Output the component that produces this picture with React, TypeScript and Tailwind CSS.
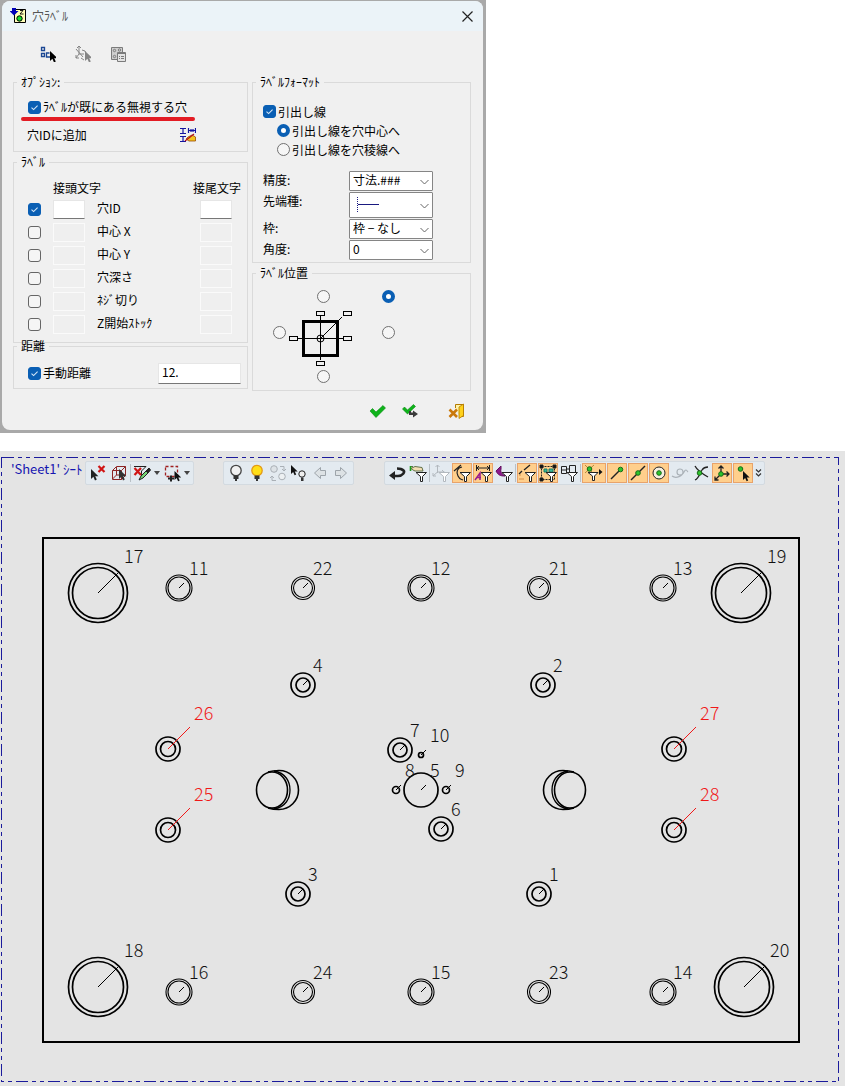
import { useId, type ReactNode } from "react";

/* ---------- form controls ---------- */

type CheckProps = { label?: string; ariaLabel?: string; checked?: boolean };

function Check({ label, ariaLabel, checked = false }: CheckProps) {
  const id = useId();
  return (
    <span className="flex items-center gap-0.5">
      <span className="grid shrink-0">
        <input
          id={id}
          type="checkbox"
          defaultChecked={checked}
          aria-label={ariaLabel}
          className="peer col-start-1 row-start-1 size-[13px] appearance-none rounded-[3px] border border-[#666] bg-[#f5f5f5] checked:border-[#0a5fb4] checked:bg-[#0a5fb4]"
        />
        <svg
          viewBox="0 0 13 13"
          className="pointer-events-none invisible col-start-1 row-start-1 size-[13px] peer-checked:visible"
          fill="none"
          stroke="#d5e6f7"
          strokeWidth="1.1"
        >
          <path d="M3.5 6.6 5.6 8.6 9.6 4.6" />
        </svg>
      </span>
      {label && <label htmlFor={id}>{label}</label>}
    </span>
  );
}

type RadioProps = { name: string; label?: string; ariaLabel?: string; checked?: boolean };

function Radio({ name, label, ariaLabel, checked = false }: RadioProps) {
  const id = useId();
  return (
    <span className="flex items-center gap-0.5">
      <input
        id={id}
        type="radio"
        name={name}
        defaultChecked={checked}
        aria-label={ariaLabel}
        className="size-[13px] shrink-0 appearance-none rounded-full border border-[#707070] bg-[#f6f6f6] checked:border-4 checked:border-[#0a5fb4] checked:bg-white"
      />
      {label && <label htmlFor={id}>{label}</label>}
    </span>
  );
}

function Select({ label, value, tall, children }: { label: string; value: string; tall?: boolean; children?: ReactNode }) {
  const id = useId();
  return (
    <div className="flex items-start">
      <label htmlFor={id} className="w-[86px] pt-0.5">
        {label}
      </label>
      <span className="grid w-[84px]">
        <select
          id={id}
          className={`col-start-1 row-start-1 appearance-none rounded-[1px] border border-[#858585] bg-white pr-4 pb-0.5 pl-[3px] leading-4 ${tall ? "h-[26px]" : "h-5"}`}
        >
          <option>{value}</option>
        </select>
        <span className="pointer-events-none col-start-1 row-start-1 flex items-center justify-between pr-1 pl-2">
          <span>{children}</span>
          <svg viewBox="0 0 9 6" className="mt-0.5 h-1.5 w-[9px]" fill="none" stroke="#666">
            <path d="M.5 1 4.5 5 8.5 1" />
          </svg>
        </span>
      </span>
    </div>
  );
}

function Group({ title, className = "", children }: { title: string; className?: string; children: ReactNode }) {
  return (
    <fieldset className={`border border-[#dadada] ${className}`}>
      <legend className="ml-[3px] px-1 leading-[14px]">{title}</legend>
      {children}
    </fieldset>
  );
}

const cursor = "M0 0V10L2.4 7.8 4 11.4 5.8 10.6 4.2 7.2H7.4Z";

/* ---------- dialog ---------- */

const labelRows = [
  { text: "穴ID", on: true },
  { text: "中心 X", on: false },
  { text: "中心 Y", on: false },
  { text: "穴深さ", on: false },
  { text: "ﾈｼﾞ切り", on: false },
  { text: "Z開始ｽﾄｯｸ", on: false },
];

function AffixInput({ enabled, label }: { enabled: boolean; label: string }) {
  return (
    <input
      type="text"
      disabled={!enabled}
      aria-label={label}
      className="h-[19px] w-8 border border-[#fafafa] bg-[#efefef] enabled:border-[#e6e6e6] enabled:border-b-[#777] enabled:bg-white"
    />
  );
}

function PositionDiagram() {
  return (
    <svg viewBox="288 303 70 67" className="h-[67px] w-[70px]" fill="none" stroke="#000" shapeRendering="crispEdges">
      <rect x="303.5" y="321.5" width="34" height="34" strokeWidth="3" />
      <path d="M298 338.5H343M320.5 316V360" />
      <path d="M320.5 338.5 342 317" shapeRendering="auto" />
      <circle cx="320.5" cy="338.5" r="3.5" shapeRendering="auto" />
      <path d="M316.5 311.5h8v4h-8zM343.500 311.500h8v4h-8zM289.500 336.500h8v4h-8zM343.500 336.500h8v4h-8zM316.500 361.500h8v4h-8z" />
    </svg>
  );
}

function HoleLabelDialog() {
  return (
    <section
      aria-label="穴ﾗﾍﾞﾙ"
      className="w-full max-w-[486px] bg-[#a9a9a9] pt-px pr-[3px] pb-[3px] pl-0.5"
    >
      <div className="overflow-hidden rounded-lg bg-[#f0f0f0]">
        <header className="flex h-[30px] items-center bg-[#ebf3f8] pr-2.5 pl-2">
          <svg viewBox="0 0 16 16" className="size-4">
            <path d="M4.500 1.500h11v13h-11z" fill="#ffffb8" stroke="#000" />
            <path d="M2 0h4v3h2.500L4 7.500 -.5 3H2z" fill="#0000b8" />
            <circle cx="9.500" cy="10.500" r="2.700" fill="#12dc2c" stroke="#000" />
            <path d="M10 2.500h3L10 6h3.500" fill="none" stroke="#000" strokeWidth=".9" />
          </svg>
          <h1 className="ml-1.5 flex-1 text-xs text-[#555]">穴ﾗﾍﾞﾙ</h1>
          <button type="button" aria-label="閉じる">
            <svg viewBox="0 0 11 11" className="size-[11px]" stroke="#222" strokeWidth="1.2">
              <path d="M.5.5 10.500 10.500M10.500.5.5 10.500" />
            </svg>
          </button>
        </header>

        <div className="flex gap-[19px] pt-[15px] pl-[38px]">
          <button type="button" aria-label="穴を選択">
            <svg viewBox="0 0 16 16" className="size-4">
              <path d="M1.500 1.500h3v3h-3zM1.500 7.500h3v3h-3zM9.500 7h-3v4h4" fill="none" stroke="#1b4794" strokeWidth="1.300" />
              <path d={cursor} transform="translate(10 5)" />
            </svg>
          </button>
          <button type="button" aria-label="座標系を選択" disabled>
            <svg viewBox="0 0 16 16" className="size-4" fill="none" stroke="#858585">
              <path d="M4 0v8h5M4 8l-3 4M1 3l7 8M2 2l2-2 2 2M7 4q4 0 4 4M6 12l3 2M1 9v3h3" />
              <path d={cursor} transform="translate(10 5)" fill="#858585" stroke="none" />
            </svg>
          </button>
          <button type="button" aria-label="穴テーブル" disabled>
            <svg viewBox="0 0 16 16" className="size-4" fill="none" stroke="#7b7b7b">
              <path d="M1.500 1.500h11v12h-11z" fill="#cfcfcf" />
              <circle cx="4.500" cy="4.500" r="1.200" />
              <circle cx="9.500" cy="4" r="1.200" />
              <circle cx="4.500" cy="10.500" r="1.200" />
              <path d="M7.500 6.500h8v9h-8z" fill="#e3e3e3" />
              <path d="M7 7.500h9M9 10.500h1m1 0h3M9 12.500h1m1 0h3" />
            </svg>
          </button>
        </div>

        <div className="flex gap-1 pt-[13px] pr-3 pl-[11px] text-xs leading-[14px] text-black">
          <div className="w-[235px]">
            <Group title="ｵﾌﾟｼｮﾝ:" className="pt-[11px] pb-2">
              <div className="pl-[14px]">
                <Check label="ﾗﾍﾞﾙが既にある無視する穴" checked />
              </div>
              <div className="mt-[3px] ml-[7px] h-1 w-[174px] rounded-full bg-[#e31c24]" />
              <div className="mt-[6px] flex items-center justify-between pr-[51px] pl-[13px]">
                <span>穴IDに追加</span>
                <button type="button" aria-label="穴IDに追加">
                  <svg viewBox="0 0 16 16" className="size-4" fill="none">
                    <path d="M0 1.500h6M0 6.500h6M3 1v6M0 9.500h6M0 14.500h6M3 9v6M8.500 1v5M15.500 1v5M9 3.500h6M11 2v3M13 2v3" stroke="#1414a0" strokeWidth="1.200" />
                    <path d="M8 10 12 8 15.500 10V14H9L6 12Z" fill="#f4c31c" stroke="#9b4a00" strokeWidth=".8" />
                    <path d="M5 14 14 7" stroke="#b3111f" strokeWidth="1.200" />
                  </svg>
                </button>
              </div>
            </Group>

            <Group title="ﾗﾍﾞﾙ" className="mt-[3px] pt-3 pb-1.5">
              <div className="mb-[3px] flex justify-between pr-[6px] pl-[39px]">
                <span>接頭文字</span>
                <span>接尾文字</span>
              </div>
              {labelRows.map((row) => (
                <div key={row.text} className="flex h-[23px] items-center pr-[15px] pl-[14px]">
                  <Check ariaLabel={row.text} checked={row.on} />
                  <span className="ml-3 flex flex-1 items-center gap-3">
                    <AffixInput enabled={row.on} label={`${row.text} 接頭文字`} />
                    <span className="flex-1 pb-1">{row.text}</span>
                    <AffixInput enabled={row.on} label={`${row.text} 接尾文字`} />
                  </span>
                </div>
              ))}
            </Group>

            <Group title="距離" className="-mt-1 pt-2.5 pb-[5px]">
              <div className="flex h-5 items-center justify-between pr-[6px] pl-[14px]">
                <Check label="手動距離" checked />
                <input
                  type="text"
                  aria-label="手動距離"
                  defaultValue="12."
                  className="h-[21px] w-[83px] border border-[#e6e6e6] border-b-[#777] bg-white px-[3px] pb-1"
                />
              </div>
            </Group>
          </div>

          <div className="flex-1">
            <Group title="ﾗﾍﾞﾙﾌｫｰﾏｯﾄ" className="pt-[13px] pb-0.5">
              <div className="pl-[10px]">
                <div className="flex h-[19px] items-center">
                  <Check label="引出し線" checked />
                </div>
                <div className="flex h-[19px] items-center pl-[14px]">
                  <Radio name="leader" label="引出し線を穴中心へ" checked />
                </div>
                <div className="flex h-[19px] items-center pl-[14px]">
                  <Radio name="leader" label="引出し線を穴稜線へ" />
                </div>
                <div className="mt-3 flex flex-col gap-px">
                  <Select label="精度:" value="寸法.###" />
                  <Select label="先端種:" value="" tall>
                    <svg viewBox="0 0 22 18" className="h-[18px] w-[22px]" stroke="#1a1a80" shapeRendering="crispEdges">
                      <path d="M.5 1V17" strokeDasharray="1 1" />
                      <path d="M1 8.500H22" />
                    </svg>
                  </Select>
                  <Select label="枠:" value="枠 − なし" />
                  <Select label="角度:" value="0" />
                </div>
              </div>
            </Group>

            <Group title="ﾗﾍﾞﾙ位置" className="mt-[3px] pt-2.5 pb-[7px]">
              <div className="grid grid-cols-[15px_70px_24px_13px] justify-items-center pl-5">
                <div className="col-start-2">
                  <Radio name="position" ariaLabel="上" />
                </div>
                <div className="col-start-4">
                  <Radio name="position" ariaLabel="右上" checked />
                </div>
                <div className="mt-[23px] justify-self-start">
                  <Radio name="position" ariaLabel="左" />
                </div>
                <PositionDiagram />
                <div className="col-start-4 mt-[23px]">
                  <Radio name="position" ariaLabel="右" />
                </div>
                <div className="col-start-2">
                  <Radio name="position" ariaLabel="下" />
                </div>
              </div>
            </Group>
          </div>
        </div>

        <footer className="flex justify-end pt-3 pr-[18px] pb-[11px]">
          <button type="button" aria-label="OK">
            <svg viewBox="0 0 17 16" className="h-4 w-[17px]">
              <path d="M1 8 3.500 5.500 7 9 14 2.500 16.500 5 7 14.500Z" fill="#0eb31a" stroke="#078a12" strokeWidth=".6" />
            </svg>
          </button>
          <button type="button" aria-label="適用" className="ml-4">
            <svg viewBox="0 0 17 16" className="h-4 w-[17px]">
              <path d="M.5 6 2.500 4 5.500 7 11.500 1.500 13.500 3.500 5.500 11Z" fill="#0eb31a" stroke="#078a12" strokeWidth=".6" />
              <path d="M7 8v4h4v2.500L16 11 11 7.500v2H9V8z" fill="#3b3b3b" />
            </svg>
          </button>
          <button type="button" aria-label="キャンセル" className="ml-[29px]">
            <svg viewBox="0 0 17 16" className="h-4 w-[17px]">
              <path d="M7.500 5V1.500h8v12h-4" fill="#fff3a8" stroke="#b37a00" />
              <path d="M11 4 15.500 1v11.500L11 15.500Z" fill="#ffd21c" stroke="#b37a00" strokeWidth=".8" />
              <path d="M1.500 6.500 9 14M9 6.500 1.500 14" stroke="#c9780c" strokeWidth="2.600" />
            </svg>
          </button>
        </footer>
      </div>
    </section>
  );
}

/* ---------- drawing ---------- */

type Hole = {
  n: string;
  x: number;
  y: number;
  radii: number[];
  stroke: number;
  tx: number;
  ty: number;
  lead: number;
  red?: boolean;
};

const big = (n: string, x: number, y: number): Hole => ({ n, x, y, radii: [29.5, 25.5], stroke: 1.7, tx: 26, ty: -30, lead: 20 });
const plain = (n: string, x: number, y: number, r: number): Hole => ({ n, x, y, radii: [r, r - 2], stroke: 1.1, tx: 10, ty: -13, lead: 5 });
const ring = (n: string, x: number, y: number): Hole => ({ n, x, y, radii: [12, 7], stroke: 1.7, tx: 10, ty: -13, lead: 5 });
const redRing = (n: string, x: number, y: number): Hole => ({ n, x, y, radii: [12, 7.5], stroke: 1.7, tx: 26, ty: -29, lead: 22, red: true });
const pin = (n: string, x: number, y: number, r: number): Hole => ({ n, x, y, radii: [r], stroke: 1.7, tx: 9, ty: -13, lead: 5 });

const holes: Hole[] = [
  big("17", 98, 593),
  big("19", 741, 593),
  big("18", 98, 987),
  big("20", 744, 987),
  plain("11", 179, 588, 13),
  plain("22", 303, 588, 11.5),
  plain("12", 421, 588, 13),
  plain("21", 539, 588, 11.5),
  plain("13", 663, 588, 13),
  plain("16", 179, 992, 13),
  plain("24", 303, 992, 11.5),
  plain("15", 421, 992, 13),
  plain("23", 539, 992, 11.5),
  plain("14", 663, 992, 13),
  ring("4", 303, 685),
  ring("2", 543, 685),
  ring("7", 400, 750),
  ring("6", 441, 829),
  ring("3", 298, 894),
  ring("1", 539, 894),
  redRing("26", 168, 749),
  redRing("25", 168, 830),
  redRing("27", 674, 749),
  redRing("28", 674, 830),
  pin("10", 421, 755, 2.5),
  pin("8", 396, 790, 3.5),
  pin("9", 446, 790, 3.5),
  pin("5", 421, 790, 17),
];

function OblongBore() {
  return (
    <g strokeWidth="1.6">
      <ellipse cx="272" cy="790" rx="15.500" ry="18" />
      <path d="M274 771C286 773 290 782 290 790S286 807 274 809" strokeWidth="1.300" />
      <path d="M268 772Q273 770.500 279 770.500A19.500 19.500 0 0 1 279 809.500Q273 809.500 268 808" />
    </g>
  );
}

function SheetDrawing() {
  return (
    <svg viewBox="0 451 845 635" className="col-start-1 row-start-1 w-full" role="img" aria-label="Sheet1" fill="none">
      <rect x="1.500" y="457.500" width="837" height="624" stroke="#1b1b9c" strokeDasharray="12 4 4 4 4 4" shapeRendering="crispEdges" />
      <rect x="43" y="538" width="756" height="504" stroke="#000" strokeWidth="2" shapeRendering="crispEdges" />
      <g stroke="#000">
        {holes.map((h) => (
          <g key={h.n}>
            {h.radii.map((r) => (
              <circle key={r} cx={h.x} cy={h.y} r={r} strokeWidth={h.stroke} />
            ))}
            <path d={`M${h.x} ${h.y}l${h.lead} ${-h.lead}`} stroke={h.red ? "#f01818" : "#000"} strokeWidth="1" />
          </g>
        ))}
        <OblongBore />
        <g transform="translate(842 0) scale(-1 1)">
          <OblongBore />
        </g>
      </g>
      <g className="font-['Noto_Sans_CJK_JP',sans-serif] text-[18px] font-light">
        {holes.map((h) => (
          <text key={h.n} x={h.x + h.tx} y={h.y + h.ty} fill={h.red ? "#f01818" : "#111"}>
            {h.n}
          </text>
        ))}
      </g>
    </svg>
  );
}

/* ---------- sheet toolbars ---------- */

function Tool({ label, on, wide, children }: { label: string; on?: boolean; wide?: boolean; children: ReactNode }) {
  return (
    <button
      type="button"
      aria-label={label}
      aria-pressed={on}
      className={`flex h-5 items-center justify-center ${wide ? "w-6" : "w-5"} ${on ? "border border-[#e8a36b] bg-[#ffcf8c]" : ""}`}
    >
      <svg viewBox="0 0 18 18" className="size-[18px] shrink-0" fill="none" stroke="#222">
        {children}
      </svg>
    </button>
  );
}

function Caret({ label }: { label: string }) {
  return (
    <button type="button" aria-label={label} className="flex h-5 w-2 items-center justify-center">
      <svg viewBox="0 0 6 4" className="h-1 w-1.5" fill="#444">
        <path d="M0 0H6L3 4Z" />
      </svg>
    </button>
  );
}

const Divider = () => <span className="h-[18px] w-px bg-[#b9c0c6]" />;

function Bar({ children }: { children: ReactNode }) {
  return (
    <div className="flex h-6 items-center gap-px rounded-[2px] border border-[#d3dae0] bg-[#e3eaf0] px-0.5">{children}</div>
  );
}

const Funnel = ({ stroke = "#222" }: { stroke?: string }) => (
  <path d="M7 8.500H17.500L13.500 12.500V17.500H11.500V12.500Z" fill="#fff" stroke={stroke} />
);

const Dot = ({ x, y }: { x: number; y: number }) => (
  <circle cx={x} cy={y} r="2.300" fill="#2dc52d" stroke="#176b17" />
);

const Bulb = ({ fill, stroke = "#444" }: { fill: string; stroke?: string }) => (
  <>
    <circle cx="9" cy="6.500" r="5.200" fill={fill} stroke={stroke} strokeWidth="1.300" />
    <path d="M6.500 11.500h5v3.500h-1.500v2h-2v-2h-1.500z" fill="#333" stroke="none" />
  </>
);

function SheetToolbars() {
  return (
    <div className="z-10 col-start-1 row-start-1 flex items-start self-start pt-[10px] pl-[11px]">
      <h2 className="w-[74px] text-[13px] leading-4 whitespace-nowrap text-[#1616b0]">'Sheet1' ｼｰﾄ</h2>
      <Bar>
        <Tool label="選択解除">
          <path d={cursor} transform="translate(2 5)" fill="#222" stroke="none" />
          <path d="M9.500 2 15.500 8M15.500 2 9.500 8" stroke="#d01515" strokeWidth="2.200" />
        </Tool>
        <Tool label="ボディ選択">
          <path d="M2.500 6.500h9v9h-9zM2.500 6.500l4-4h9v9l-4 4M11.500 6.500l4-4M6.500 3v8h9M6.500 11l-4 4" stroke="#8d2525" />
          <path d={cursor} transform="translate(9 5)" fill="#333" stroke="none" />
        </Tool>
        <Divider />
        <Tool label="フィルタ解除">
          <path d="M1 2.500H13L8.500 7V12" />
          <path d="M1.500 4 8 11M8 4 1.500 11" stroke="#d01515" strokeWidth="2.200" />
          <path d="M6 16 8 12 13 7 15 9 10 14Z" fill="#74d474" />
          <path d="M13 7 16 4 17.500 6 15 9Z" fill="#222" />
        </Tool>
        <Caret label="フィルタメニュー" />
        <Tool label="範囲選択">
          <path d="M2.500 2.500h12v10h-12z" stroke="#a02020" strokeWidth="1.300" strokeDasharray="3 2" />
          <path d="M5 14.500h6M8 11.500v6" strokeWidth="2" />
          <path d={cursor} transform="translate(11.500 7) scale(.9)" fill="#111" stroke="none" />
        </Tool>
        <Caret label="範囲選択メニュー" />
      </Bar>
      <div className="w-[29px]" />
      <Bar>
        <Tool label="非表示"><Bulb fill="#f1f1f1" /></Tool>
        <Tool label="表示"><Bulb fill="#ffdf18" stroke="#e39a16" /></Tool>
        <Tool label="表示切替">
          <g stroke="#aab0b6">
            <circle cx="5" cy="5" r="3.300" fill="#dde2e6" />
            <circle cx="13" cy="12.500" r="3.300" fill="#edf0f2" />
            <path d="M11 2.500h4v4M13 5l2 2 2-2M7 16.500H3v-4M1 14l2-2 2 2" />
          </g>
        </Tool>
        <Tool label="表示選択">
          <path d={cursor} transform="translate(1 1) scale(.9)" fill="#111" stroke="none" />
          <circle cx="12" cy="10" r="3.200" fill="#eee" />
          <path d="M11 13.500h2.500V17H11z" fill="#333" stroke="none" />
        </Tool>
        <Tool label="戻る"><path d="M3.500 9 9.500 3.500V6.500H14.500V11.500H9.500V14.500Z" fill="#dde2e5" stroke="#9da4aa" /></Tool>
        <Tool label="進む"><path d="M14.500 9 8.500 3.500V6.500H3.500V11.500H8.500V14.500Z" fill="#dde2e5" stroke="#9da4aa" /></Tool>
      </Bar>
      <div className="w-[30px]" />
      <Bar>
        <Tool label="リセット">
          <path d="M5 12H10C15 12 17 8 15.500 6.500S11 4.500 9 4.500" strokeWidth="2.600" />
          <path d="M1 11.500 7 7V16Z" fill="#222" stroke="none" />
        </Tool>
        <Tool label="面フィルタ">
          <path d="M1.500 7V2.500H4M2 4.500 6 2.500 13 3.500 14 7H6L4 6Z" fill="#f3ddb3" stroke="#62724b" />
          <path d="M1.500 2v5" stroke="#1a9f1a" strokeWidth="1.600" />
          <Funnel />
        </Tool>
        <Divider />
        <Tool label="座標系フィルタ">
          <path d="M5.500 9V1M3.500 3l2-2 2 2M5.500 8h7M10 6l2 2-2 2M5.500 8 1 12M1 9v3h3" stroke="#b2b8be" />
          <Funnel stroke="#b2b8be" />
        </Tool>
        <Tool label="曲線フィルタ" on>
          <path d="M1 7 8 1M9 3C4 4 3 8 5 12S8 15 10 16" strokeWidth="1.200" />
          <Funnel />
        </Tool>
        <Tool label="寸法フィルタ" on>
          <path d="M2.500 1v6M15.500 1v6M3 4h12M5 2 3 4l2 2M13 2l2 2-2 2" />
          <path d="M1 16 6 9V16M3 13.500h4" stroke="#9a1a8c" strokeWidth="1.500" />
          <Funnel />
        </Tool>
        <Tool label="注記フィルタ">
          <path d="M1 7 6 2v3c-1 3 1 5 4 7-5 0-7-1-9-5z" fill="#8c198c" stroke="#65105f" />
          <Funnel />
        </Tool>
        <Divider />
        <Tool label="線フィルタ" on>
          <path d="M1 10 4 7M6 6 12 1" strokeWidth="1.300" />
          <path d="M1 11h2M1 15h5" stroke="#d48f4a" />
          <Funnel />
        </Tool>
        <Tool label="グループフィルタ" on>
          <path d="M2.500 2.500h13v13h-13z" strokeDasharray="2 1" />
          <path d="M1 1h3v3H1zM14 1h3v3h-3zM1 14h3v3H1z" fill="#111" />
          <path d="M5 5h3v3H5zM10 5h4v3h-4z" fill="#39b99c" stroke="#187b67" />
          <Funnel />
        </Tool>
        <Tool label="部品フィルタ">
          <path d="M1.500 2.500h5v7h-5zM1.500 6h5M9.500 1.500h6v8h-6zM6.500 5h3" />
          <Funnel />
        </Tool>
        <Divider />
        <Tool label="点フィルタ" on wide>
          <path d="M0 1 8 9M9 1 0 9" stroke="#b78a3a" />
          <Dot x={4.500} y={5} />
          <path d="M3 8.500H13L9.500 12V16.500H7.500V12Z" fill="#fff" />
          <path d="M14 5 17.500 8 14 11Z" fill="#111" stroke="none" />
        </Tool>
        <Tool label="端点" on><path d="M3 15 12 6" strokeWidth="1.500" /><Dot x={12.500} y={5.500} /></Tool>
        <Tool label="中点" on><path d="M2 16 16 2" strokeWidth="1.500" /><Dot x={9} y={9} /></Tool>
        <Tool label="中心点" on><circle cx="9" cy="9" r="6" fill="#f6efe0" /><Dot x={9} y={9} /></Tool>
        <Tool label="曲線上の点">
          <path d="M1 12C5 15 12 12 12 8S6 4 6 8s5 4 7 0 3-1 4 0" stroke="#abb2b8" strokeWidth="1.200" />
        </Tool>
        <Tool label="交点">
          <path d="M3 2C5 6 9 9 16 13M3 16C7 14 8 9 10 6S14 3 16 3" strokeWidth="1.300" />
          <Dot x={7.500} y={9} />
        </Tool>
        <Tool label="原点" on>
          <path d="M8 10V2M5.500 4.500 8 2l2.500 2.500M8 10h8M13.500 7.500 16 10l-2.500 2.500M8 10 2 16M2 12.500V16h3.500" strokeWidth="1.300" />
          <Dot x={8} y={10} />
        </Tool>
        <Tool label="点選択" on>
          <Dot x={6.500} y={5} />
          <path d={cursor} transform="translate(9 7) scale(.9)" fill="#111" stroke="none" />
        </Tool>
        <button type="button" aria-label="その他" className="flex h-5 w-2 items-center justify-center">
          <svg viewBox="0 0 7 8" className="h-2 w-[7px]" fill="none" stroke="#333" strokeWidth="1.200">
            <path d="M1 .5 3.500 3 6 .5M1 4.500 3.500 7 6 4.500" />
          </svg>
        </button>
      </Bar>
    </div>
  );
}

export default function App() {
  return (
    <main className="min-h-screen bg-white font-['Noto_Sans_CJK_JP',sans-serif]">
      <HoleLabelDialog />
      <section aria-label="シート" className="mt-[18px] mr-[3px] grid bg-[#e4e4e4]">
        <SheetDrawing />
        <SheetToolbars />
      </section>
    </main>
  );
}
